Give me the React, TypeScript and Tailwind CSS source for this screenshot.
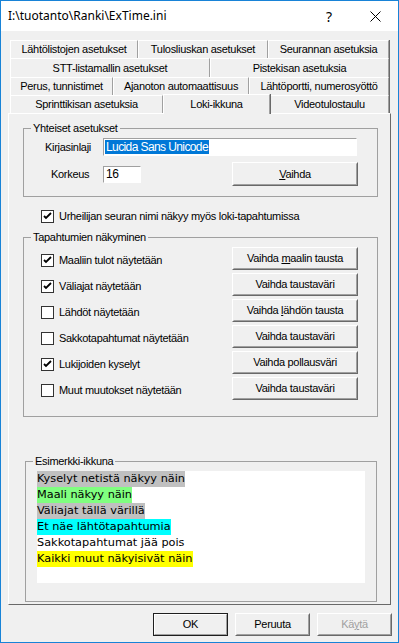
import React from "react";

const ui = { fontFamily: '"Liberation Sans", Arial, sans-serif' };

function Tab({ label, w, selected }: { label: string; w: number; selected?: boolean }) {
  return (
    <div
      style={{ width: w }}
      className={
        selected
          ? "relative z-10 -mt-[2px] -mb-[1px] h-[20px] bg-[#f0f0f0] border-l border-t border-white border-r border-r-[#a0a0a0] shadow-[1px_0_0_#696969] flex items-center justify-center text-[11px] text-black"
          : "h-full bg-[#f0f0f0] border-l border-t border-white border-r border-r-[#a0a0a0] shadow-[1px_0_0_#696969] flex items-center justify-center text-[11px] text-black"
      }
    >
      <span>{label}</span>
    </div>
  );
}

function Btn({ children, w, h = 23, def, disabled }: { children: React.ReactNode; w: number; h?: number; def?: boolean; disabled?: boolean }) {
  return (
    <div
      style={{ width: w, height: h }}
      className={
        (def
          ? "border border-[#1f1f1f] "
          : "border border-t-white border-l-white border-r-[#696969] border-b-[#696969] ") +
        "bg-[#f0f0f0] flex items-center justify-center text-[11px] " +
        (disabled ? "text-[#a0a0a0]" : "text-black")
      }
    >
      <div
        className={
          def
            ? "w-full h-full border border-t-white border-l-white border-r-[#a0a0a0] border-b-[#a0a0a0] flex items-center justify-center"
            : "w-full h-full border border-transparent border-r-[#a0a0a0] border-b-[#a0a0a0] flex items-center justify-center"
        }
      >
        <span>{children}</span>
      </div>
    </div>
  );
}

function Check({ checked }: { checked?: boolean }) {
  return (
    <div className="w-[13px] h-[13px] bg-white border border-[#333333] flex items-center justify-center shrink-0">
      {checked && (
        <svg width="9" height="9" viewBox="0 0 9 9">
          <path d="M1 4 L3 6 L8 1" stroke="#000" strokeWidth="1.8" fill="none" />
        </svg>
      )}
    </div>
  );
}

function Group({ label, className, children }: { label: string; className: string; children: React.ReactNode }) {
  return (
    <fieldset className={"border border-[#a0a0a0] " + className}>
      <legend className="ml-[7px] px-[2px] text-[11px] leading-[13px] text-black">{label}</legend>
      {children}
    </fieldset>
  );
}

const rows: [string, boolean, React.ReactNode][] = [
  ["Maaliin tulot näytetään", true, <>Vaihda <u>m</u>aalin tausta</>],
  ["Väliajat näytetään", true, <>Vaihda taustaväri</>],
  ["Lähdöt näytetään", false, <>Vaihda <u>l</u>ähdön tausta</>],
  ["Sakkotapahtumat näytetään", false, <>Vaihda taustaväri</>],
  ["Lukijoiden kyselyt", true, <>Vaihda pollausväri</>],
  ["Muut muutokset näytetään", false, <>Vaihda taustaväri</>],
];

const sample: [string, string][] = [
  ["Kyselyt netistä näkyy näin", "bg-[#c0c0c0]"],
  ["Maali näkyy näin", "bg-[#80ff80]"],
  ["Väliajat tällä värillä", "bg-[#c0c0c0]"],
  ["Et näe lähtötapahtumia", "bg-[#00ffff]"],
  ["Sakkotapahtumat jää pois", ""],
  ["Kaikki muut näkyisivät näin", "bg-[#ffff00]"],
];

export default function App() {
  return (
    <div style={ui} className="w-[399px] h-[643px] border border-[#1883d7] bg-[#f0f0f0] flex flex-col overflow-hidden tracking-[-0.3px]">
      {/* title bar */}
      <div className="h-[30px] bg-white flex items-center shrink-0 tracking-normal">
        <span className="ml-[7px] text-[12px] text-black" style={{ fontFamily: '"Noto Sans", "Open Sans", sans-serif' }}>
          I:\tuotanto\Ranki\ExTime.ini
        </span>
        <span className="ml-auto w-[46px] text-center text-[14px] text-black" style={{ fontFamily: '"Noto Sans", sans-serif' }}>?</span>
        <div className="w-[46px] flex items-center justify-center">
          <svg width="11" height="11" viewBox="0 0 11 11">
            <path d="M0.5 0.5 L10.5 10.5 M10.5 0.5 L0.5 10.5" stroke="#000" strokeWidth="1" />
          </svg>
        </div>
      </div>

      {/* tabs */}
      <div className="mt-[9px] ml-[9px] w-[380px] flex flex-col">
        <div className="flex h-[18px]">
          <Tab label="Lähtölistojen asetukset" w={128} />
          <Tab label="Tulosliuskan asetukset" w={130} />
          <Tab label="Seurannan asetuksia" w={121} />
        </div>
        <div className="flex h-[19px]">
          <Tab label="STT-listamallin asetukset" w={200} />
          <Tab label="Pistekisan asetuksia" w={179} />
        </div>
        <div className="flex h-[18px]">
          <Tab label="Perus, tunnistimet" w={103} />
          <Tab label="Ajanoton automaattisuus" w={136} />
          <Tab label="Lähtöportti, numerosyöttö" w={140} />
        </div>
        <div className="flex h-[18px] items-end">
          <Tab label="Sprinttikisan asetuksia" w={153} />
          <Tab label="Loki-ikkuna" w={107} selected />
          <Tab label="Videotulostaulu" w={119} />
        </div>
      </div>

      {/* panel */}
      <div className="ml-[7px] w-[383px] h-[492px] border border-t-white border-l-white border-r-[#696969] border-b-[#696969] flex flex-col">
        <Group label="Yhteiset asetukset" className="ml-[14px] mt-[8px] w-[355px] h-[75px]">
          <div className="flex items-center mt-[3px] h-[18px] pl-[21px]">
            <span className="w-[58px] text-[11px]">Kirjasinlaji</span>
            <div className="w-[254px] h-[18px] bg-white border border-[#a0a0a0] border-b-white border-r-white flex items-center pl-[1px]">
              <span className="bg-[#0078d7] text-white text-[12px] leading-[14px] px-[1px] tracking-[-0.6px]">Lucida Sans Unicode</span>
            </div>
          </div>
          <div className="flex items-center mt-[6px] h-[24px] pl-[27px]">
            <span className="w-[52px] text-[11px]">Korkeus</span>
            <div className="w-[38px] h-[17px] bg-white border border-[#a0a0a0] border-b-white border-r-white flex items-center pl-[2px] text-[12px]">16</div>
            <div className="ml-[91px]">
              <Btn w={126} h={24}><u>V</u>aihda</Btn>
            </div>
          </div>
        </Group>

        <div className="flex items-center gap-[5px] ml-[32px] mt-[13px] h-[13px]">
          <Check checked />
          <span className="text-[11px]">Urheilijan seuran nimi näkyy myös loki-tapahtumissa</span>
        </div>

        <Group label="Tapahtumien näkyminen" className="ml-[14px] mt-[8px] w-[355px] h-[186px]">
          <div className="flex flex-col gap-[3px] mt-[3px]">
            {rows.map(([t, c, b], i) => (
              <div key={i} className="flex items-center h-[23px]">
                <div className="ml-[17px] mt-[3px] flex items-center gap-[5px] w-[191px]">
                  <Check checked={c} />
                  <span className="text-[11px]">{t}</span>
                </div>
                <Btn w={126}>{b}</Btn>
              </div>
            ))}
          </div>
        </Group>

        <Group label="Esimerkki-ikkuna" className="ml-[16px] mt-[38px] w-[352px] h-[147px]">
          <div className="mx-[11px] mt-[3px] h-[112px] bg-white flex flex-col items-start tracking-normal" style={{ fontFamily: '"DejaVu Sans", Verdana, sans-serif' }}>
            {sample.map(([t, bg], i) => (
              <div key={i} className={"h-[16px] leading-[16px] text-[11.3px] text-black " + bg}>{t}</div>
            ))}
          </div>
        </Group>
      </div>

      {/* bottom buttons */}
      <div className="flex justify-end gap-[7px] mt-[8px] mr-[6px]">
        <Btn w={75} def>OK</Btn>
        <Btn w={75}>Peruuta</Btn>
        <Btn w={75} disabled>Kä<u>y</u>tä</Btn>
      </div>
    </div>
  );
}
